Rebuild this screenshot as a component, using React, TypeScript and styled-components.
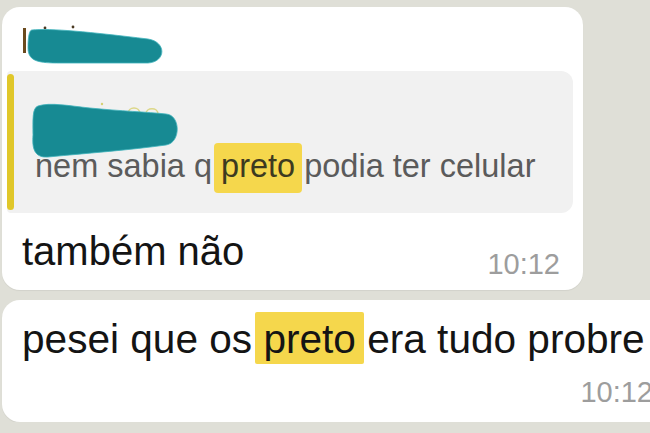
import React from "react";
import styled, { createGlobalStyle } from "styled-components";

const GlobalStyle = createGlobalStyle`
  html, body {
    margin: 0;
    padding: 0;
    background: #dfdfd7;
    overflow: hidden;
  }
  body {
    font-family: "Liberation Sans", Arial, sans-serif;
  }
`;

const Chat = styled.div`
  display: flex;
  flex-direction: column;
  gap: 10px;
  padding: 7px 0 0 2px;
  width: 720px;
`;

const Bubble = styled.div<{ $width: number; $height: number }>`
  box-sizing: border-box;
  width: ${(p) => p.$width}px;
  height: ${(p) => p.$height}px;
  background: #ffffff;
  border-radius: 18px;
  box-shadow: 0 1px 1px rgba(0, 0, 0, 0.06);
  display: flex;
  flex-direction: column;
`;

const Header = styled.div`
  box-sizing: border-box;
  height: 64px;
  padding: 17px 0 0 18px;
`;

const Quote = styled.div`
  box-sizing: border-box;
  margin-left: 5px;
  width: 566px;
  height: 142px;
  background: #f1f1f1;
  border-radius: 4px 12px 12px 4px;
  display: flex;
`;

const QuoteBar = styled.div`
  width: 7px;
  margin: 3px 0;
  border-radius: 4px;
  background: #e0c72a;
`;

const QuoteContent = styled.div`
  display: flex;
  flex-direction: column;
  padding: 29px 0 0 21px;
`;

const QuoteText = styled.div`
  font-size: 32.5px;
  line-height: 38px;
  color: #5b5b5b;
  margin-top: -13px;
  white-space: nowrap;
`;

const Highlight = styled.span<{ $pad: string; $inset: number; $radius: number }>`
  background: #f5d74c;
  padding: ${(p) => p.$pad};
  margin: 0 -${(p) => p.$inset}px;
  border-radius: ${(p) => p.$radius}px;
  color: inherit;
`;

const QuoteHighlight = styled(Highlight)`
  color: #3d3a20;
`;

const BodyRow = styled.div`
  display: flex;
  justify-content: space-between;
  align-items: flex-start;
  padding: 15px 23px 0 20px;
`;

const MessageText = styled.div`
  font-size: 40px;
  line-height: 46px;
  color: #141414;
  white-space: nowrap;
`;

const BigMessage = styled(MessageText)`
  font-size: 40.6px;
`;

const Time = styled.div<{ $top: number }>`
  font-size: 29px;
  line-height: 34px;
  color: #9d9d9d;
  margin-top: ${(p) => p.$top}px;
`;

const Body2 = styled.div`
  display: flex;
  flex-direction: column;
  align-items: flex-end;
  padding: 16px 25px 0 20px;
`;

const TextLine = styled.div`
  align-self: flex-start;
`;

const Scribble = styled.svg<{ $shift?: number }>`
  display: block;
  overflow: visible;
  margin-left: ${(p) => p.$shift ?? 0}px;
`;

const NameScribble = () => (
  <Scribble width={146} height={42} viewBox="0 0 146 42">
    <rect x={3} y={4} width={3} height={25} fill="#6b4a1e" />
    <circle cx={25} cy={4} r={1.4} fill="#4a3a22" />
    <circle cx={53} cy={3} r={1.4} fill="#4a3a22" />
    <path
      d="M12 6 C30 4 70 8 128 15 C147 18 146 38 128 39 L40 39 C20 39 8 38 8 24 C8 10 10 6 12 6 Z"
      fill="#178a93"
      stroke="#3fb3bb"
      strokeWidth={0.8}
    />
  </Scribble>
);

const QuoteScribble = () => (
  <Scribble width={150} height={60} viewBox="0 0 150 60" $shift={-5}>
    <path
      d="M98 14 C98 6 110 6 110 14 M116 14 C116 7 128 7 128 14"
      fill="none"
      stroke="#d3cc5a"
      strokeWidth={1.6}
      opacity={0.7}
    />
    <circle cx={72} cy={4} r={1.2} fill="#c9c23c" opacity={0.7} />
    <path
      d="M8 6 C20 2 40 6 60 8 C90 11 118 12 136 14 C151 15 151 43 136 45 C100 50 60 53 18 57 C4 58 2 48 3 35 C3 20 2 8 8 6 Z"
      fill="#178a93"
      stroke="#3fb3bb"
      strokeWidth={0.8}
    />
  </Scribble>
);

export default function App() {
  return (
    <>
      <GlobalStyle />
      <Chat>
        <Bubble $width={581} $height={283}>
          <Header>
            <NameScribble />
          </Header>
          <Quote>
            <QuoteBar />
            <QuoteContent>
              <QuoteScribble />
              <QuoteText>
                nem sabia q{" "}
                <QuoteHighlight $pad="5px 7px 9px" $inset={7} $radius={4}>
                  preto
                </QuoteHighlight>{" "}
                podia ter celular
              </QuoteText>
            </QuoteContent>
          </Quote>
          <BodyRow>
            <MessageText>também não</MessageText>
            <Time $top={19}>10:12</Time>
          </BodyRow>
        </Bubble>
        <Bubble $width={676} $height={122}>
          <Body2>
            <TextLine>
              <BigMessage>
                pesei que os{" "}
                <Highlight $pad="4px 8px 2px" $inset={8} $radius={2}>
                  preto
                </Highlight>{" "}
                era tudo probre
              </BigMessage>
            </TextLine>
            <Time $top={13}>10:12</Time>
          </Body2>
        </Bubble>
      </Chat>
    </>
  );
}
